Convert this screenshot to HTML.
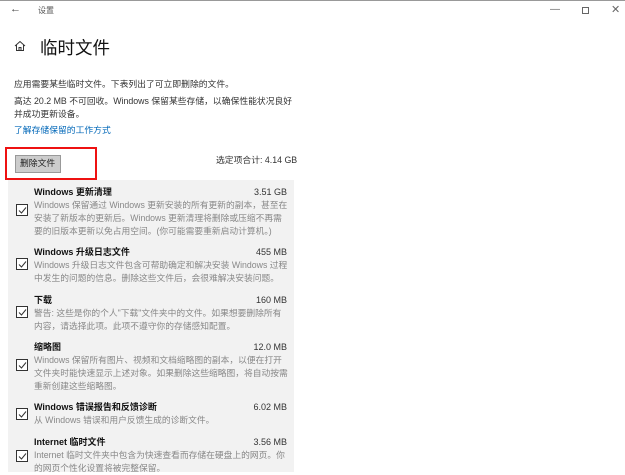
<!DOCTYPE html>
<html><head><meta charset="utf-8"><style>
*{margin:0;padding:0;box-sizing:border-box}
body{width:625px;height:472px;background:#fff;position:relative;overflow:hidden;font-family:"Liberation Sans","Noto Sans CJK SC",sans-serif;color:#222}
.a{position:absolute;white-space:nowrap}
.s{font-size:8.8px;line-height:13px}
.panel{position:absolute;left:8px;top:180px;width:286px;height:292px;background:#f2f2f2}
.cb{position:absolute;left:16px;width:12px;height:12px;border:1px solid #333;background:#fff}
.cb svg{position:absolute;left:1px;top:1px}
.t{position:absolute;left:34px;font-size:9px;font-weight:bold;color:#111;line-height:13px}
.z{position:absolute;right:338px;font-size:9px;color:#333;line-height:13px}
.d{position:absolute;left:34px;font-size:8.75px;color:#888;line-height:13px;white-space:nowrap}
</style></head><body>
<div style="position:absolute;left:0;top:0;width:625px;height:1px;background:#999"></div>
<div class="a" style="left:10px;top:3px;font-size:11px;color:#444">←</div>
<div class="a" style="left:38px;top:5px;font-size:8px;color:#555">设置</div>
<div class="a" style="left:550px;top:4px;font-size:10px;color:#666">—</div>
<div style="position:absolute;left:582px;top:7px;width:7px;height:7px;border:1px solid #666"></div>
<div class="a" style="left:611px;top:3px;font-size:11px;color:#666">✕</div>
<svg style="position:absolute;left:14px;top:40px" width="12" height="12" viewBox="0 0 12 12"><path d="M1 6 L6 1.5 L11 6 M2.5 5 V10.5 H9.5 V5 M5 10.5 V7.5 H7 V10.5" fill="none" stroke="#333" stroke-width="1"/></svg>
<div class="a" style="left:40px;top:35px;font-size:17.5px;color:#111">临时文件</div>
<div class="a s" style="left:14px;top:78px;color:#333">应用需要某些临时文件。下表列出了可立即删除的文件。</div>
<div class="a s" style="left:14px;top:95px;color:#333">高达 20.2 MB 不可回收。Windows 保留某些存储，以确保性能状况良好</div>
<div class="a s" style="left:14px;top:108px;color:#333">并成功更新设备。</div>
<div class="a s" style="left:14px;top:124px;color:#0067b8">了解存储保留的工作方式</div>
<div style="position:absolute;left:15px;top:155px;width:46px;height:18px;background:#ccc;border:1px solid #999"></div>
<div class="a s" style="left:20px;top:157px;color:#222">删除文件</div>
<div style="position:absolute;left:5px;top:147px;width:92px;height:33px;border:2px solid #e11"></div>
<div class="a s" style="left:216px;top:154px;color:#333">选定项合计: 4.14 GB</div>
<div class="panel"></div>

<div class="t" style="top:186px">Windows 更新清理</div><div class="z" style="top:186px">3.51 GB</div>
<div class="d" style="top:199px">Windows 保留通过 Windows 更新安装的所有更新的副本，甚至在<br>安装了新版本的更新后。Windows 更新清理将删除或压缩不再需<br>要的旧版本更新以免占用空间。(你可能需要重新启动计算机。)</div>
<div class="cb" style="top:204px"><svg width="9" height="9"><path d="M1 4.5 L3.5 7 L8 1.5" fill="none" stroke="#333"/></svg></div>

<div class="t" style="top:246px">Windows 升级日志文件</div><div class="z" style="top:246px">455 MB</div>
<div class="d" style="top:259px">Windows 升级日志文件包含可帮助确定和解决安装 Windows 过程<br>中发生的问题的信息。删除这些文件后，会很难解决安装问题。</div>
<div class="cb" style="top:258px"><svg width="9" height="9"><path d="M1 4.5 L3.5 7 L8 1.5" fill="none" stroke="#333"/></svg></div>

<div class="t" style="top:294px">下载</div><div class="z" style="top:294px">160 MB</div>
<div class="d" style="top:307px">警告: 这些是你的个人"下载"文件夹中的文件。如果想要删除所有<br>内容，请选择此项。此项不遵守你的存储感知配置。</div>
<div class="cb" style="top:306px"><svg width="9" height="9"><path d="M1 4.5 L3.5 7 L8 1.5" fill="none" stroke="#333"/></svg></div>

<div class="t" style="top:341px">缩略图</div><div class="z" style="top:341px">12.0 MB</div>
<div class="d" style="top:354px">Windows 保留所有图片、视频和文档缩略图的副本，以便在打开<br>文件夹时能快速显示上述对象。如果删除这些缩略图，将自动按需<br>重新创建这些缩略图。</div>
<div class="cb" style="top:359px"><svg width="9" height="9"><path d="M1 4.5 L3.5 7 L8 1.5" fill="none" stroke="#333"/></svg></div>

<div class="t" style="top:401px">Windows 错误报告和反馈诊断</div><div class="z" style="top:401px">6.02 MB</div>
<div class="d" style="top:414px">从 Windows 错误和用户反馈生成的诊断文件。</div>
<div class="cb" style="top:408px"><svg width="9" height="9"><path d="M1 4.5 L3.5 7 L8 1.5" fill="none" stroke="#333"/></svg></div>

<div class="t" style="top:436px">Internet 临时文件</div><div class="z" style="top:436px">3.56 MB</div>
<div class="d" style="top:449px">Internet 临时文件夹中包含为快速查看而存储在硬盘上的网页。你<br>的网页个性化设置将被完整保留。</div>
<div class="cb" style="top:450px"><svg width="9" height="9"><path d="M1 4.5 L3.5 7 L8 1.5" fill="none" stroke="#333"/></svg></div>
</body></html>
